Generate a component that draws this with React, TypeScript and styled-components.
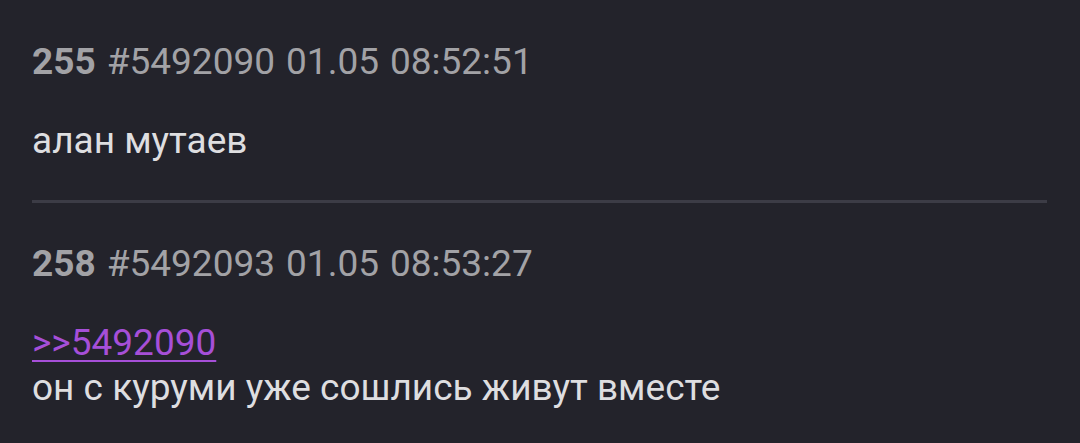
import React, { FC } from "react";
import styled, { createGlobalStyle } from "styled-components";

const GlobalStyle = createGlobalStyle`
  html, body {
    margin: 0;
    padding: 0;
    background: #23232b;
  }
  body {
    font-family: Roboto, "Noto Sans", sans-serif;
    -webkit-font-smoothing: antialiased;
  }
`;

const Thread = styled.div`
  display: flex;
  flex-direction: column;
  padding: 0 33px 0 32px;
  min-height: 443px;
  box-sizing: border-box;
  background: #23232b;
`;

const Post = styled.article<{ top: number }>`
  display: flex;
  flex-direction: column;
  padding-top: ${props => props.top}px;
`;

const PostHeader = styled.div`
  display: flex;
  gap: 11px;
  font-size: 37px;
  line-height: 42px;
  color: #a2a2a6;
`;

const PostNumber = styled.span`
  font-weight: 700;
`;

const PostBody = styled.div<{ gap: number }>`
  margin-top: ${props => props.gap}px;
  font-size: 37px;
  line-height: 45px;
  color: #dedee0;
`;

const ReplyLink = styled.a`
  color: #a64fd8;
  text-decoration: underline;
  text-decoration-thickness: 2px;
  text-underline-offset: 5px;
`;

const Divider = styled.hr`
  border: none;
  height: 3px;
  background: #3c3c46;
  margin: 37px 0 0;
`;

interface IPostProps {
    num: number,
    id: number,
    date: string,
    time: string,
    top: number,
    children?: React.ReactNode
}

const PostItem: FC<IPostProps> = ({num, id, date, time, top, children}) => (
    <Post top={top}>
        <PostHeader>
            <PostNumber>{num}</PostNumber>
            <span>#{id}</span>
            <span>{date}</span>
            <span>{time}</span>
        </PostHeader>
        {children}
    </Post>
);

const App: FC = () => {
    return (
        <>
            <GlobalStyle />
            <Thread>
                <PostItem num={255} id={5492090} date="01.05" time="08:52:51" top={41}>
                    <PostBody gap={35}>алан мутаев</PostBody>
                </PostItem>
                <Divider />
                <PostItem num={258} id={5492093} date="01.05" time="08:53:27" top={40}>
                    <PostBody gap={35}>
                        <ReplyLink href="#">&gt;&gt;5492090</ReplyLink>
                        <br />
                        он с куруми уже сошлись живут вместе
                    </PostBody>
                </PostItem>
            </Thread>
        </>
    );
};

export default App;
